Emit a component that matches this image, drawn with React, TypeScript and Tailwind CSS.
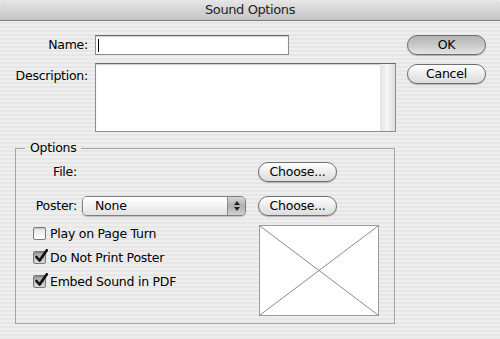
import React from "react";

const font = "font-['DejaVu_Sans',sans-serif] text-[12.5px] tracking-[-0.25px] text-black";

function AquaButton({ label, primary }: { label: string; primary?: boolean }) {
  return (
    <div
      className={`flex h-[20px] w-[79px] items-center justify-center rounded-full border border-[#6f6f6f] leading-none shadow-[0_1px_1px_rgba(0,0,0,0.25)] ${
        primary
          ? "bg-gradient-to-b from-[#b4b4b4] via-[#c9c9c9] to-[#e4e4e4]"
          : "bg-gradient-to-b from-white via-[#ececec] to-[#dcdcdc]"
      }`}
    >
      <span>{label}</span>
    </div>
  );
}

function Checkbox({ checked, label }: { checked?: boolean; label: string }) {
  return (
    <div className="flex h-[13px] items-center gap-[4px]">
      <div
        className={`relative h-[13px] w-[13px] shrink-0 rounded-[2px] border border-[#7a7a7a] shadow-[inset_0_1px_1px_rgba(0,0,0,0.15)] ${
          checked ? "bg-gradient-to-b from-[#9c9c9c] to-[#dcdcdc]" : "bg-gradient-to-b from-[#e4e4e4] to-white"
        }`}
      >
        {checked && (
          <svg className="absolute -top-[3px] left-[1px]" width="13" height="14" viewBox="0 0 13 14">
            <path d="M1.5 8 L4.6 11.5 L11.8 1.2" fill="none" stroke="#111" strokeWidth="2.6" strokeLinecap="round" strokeLinejoin="round" />
          </svg>
        )}
      </div>
      <span className="leading-[13px]">{label}</span>
    </div>
  );
}

export default function App() {
  return (
    <div
      className={`h-[339px] w-[500px] overflow-hidden bg-[repeating-linear-gradient(to_bottom,#eeeeee_0px,#eeeeee_2px,#e6e6e6_2px,#e6e6e6_4px)] ${font}`}
    >
      {/* title bar */}
      <div className="flex h-[21px] items-center justify-center rounded-t-[4px] border-b border-[#7d7d7d] bg-gradient-to-b from-[#e6e6e6] to-[#c4c4c4]">
        <span className="text-[13px] tracking-[-0.4px] text-[#222]">Sound Options</span>
      </div>

      <div className="flex pt-[14px]">
        <div className="w-[396px]">
          <div className="flex items-center">
            <div className="w-[88px] text-right">Name:</div>
            <div className="ml-[7px] flex h-[20px] w-[194px] items-center border border-[#8c8c8c] border-t-[#6a6a6a] bg-white pl-[2px] shadow-[inset_0_1px_1px_rgba(0,0,0,0.2)]">
              <div className="h-[13px] w-px bg-black" />
            </div>
          </div>
          <div className="mt-[8px] flex">
            <div className="w-[88px] pt-[4px] text-right">Description:</div>
            <div className="ml-[7px] flex h-[69px] w-[301px] border border-[#8c8c8c] border-t-[#6a6a6a] bg-white shadow-[inset_0_1px_1px_rgba(0,0,0,0.2)]">
              <div className="flex-1" />
              <div className="w-[15px] bg-gradient-to-r from-[#e4e4e4] via-[#f6f6f6] to-[#dedede]" />
            </div>
          </div>
        </div>
        <div className="ml-[11px] flex flex-col gap-[9px]">
          <AquaButton label="OK" primary />
          <AquaButton label="Cancel" />
        </div>
      </div>

      <fieldset className="ml-[15px] mt-[8px] h-[184px] w-[380px] border border-[#a4a4a4]">
        <legend className="ml-[9px] px-[5px] leading-[16px]">Options</legend>
        <div className="mt-[6px] flex items-center">
          <div className="w-[61px] text-right">File:</div>
          <div className="ml-[181px]">
            <AquaButton label="Choose..." />
          </div>
        </div>
        <div className="mt-[14px] flex items-center">
          <div className="w-[61px] text-right">Poster:</div>
          <div className="ml-[5px] flex h-[20px] w-[164px] overflow-hidden rounded-[5px] border border-[#7e7e7e] shadow-[0_1px_1px_rgba(0,0,0,0.2)]">
            <div className="flex flex-1 items-center bg-gradient-to-b from-white via-[#f2f2f2] to-[#e2e2e2] pl-[12px]">
              None
            </div>
            <div className="flex w-[18px] flex-col items-center justify-center gap-[2px] border-l border-[#8a8a8a] bg-gradient-to-b from-[#d6d6d6] via-[#b0b0b0] to-[#d0d0d0]">
              <svg width="6" height="4" viewBox="0 0 6 4">
                <path d="M0 4 L3 0 L6 4 Z" fill="#222" />
              </svg>
              <svg width="6" height="4" viewBox="0 0 6 4">
                <path d="M0 0 L3 4 L6 0 Z" fill="#222" />
              </svg>
            </div>
          </div>
          <div className="ml-[12px]">
            <AquaButton label="Choose..." />
          </div>
        </div>
        <div className="mt-[9px] flex">
          <div className="ml-[17px] flex w-[225px] flex-col gap-[11px] pt-[2px]">
            <Checkbox label="Play on Page Turn" />
            <Checkbox checked label="Do Not Print Poster" />
            <Checkbox checked label="Embed Sound in PDF" />
          </div>
          <div className="ml-[1px] h-[91px] w-[120px] border border-[#9c9c9c] bg-white">
            <svg className="h-full w-full" viewBox="0 0 100 100" preserveAspectRatio="none">
              <line x1="0" y1="0" x2="100" y2="100" stroke="#8a8a8a" strokeWidth="1" vectorEffect="non-scaling-stroke" />
              <line x1="100" y1="0" x2="0" y2="100" stroke="#8a8a8a" strokeWidth="1" vectorEffect="non-scaling-stroke" />
            </svg>
          </div>
        </div>
      </fieldset>
    </div>
  );
}
